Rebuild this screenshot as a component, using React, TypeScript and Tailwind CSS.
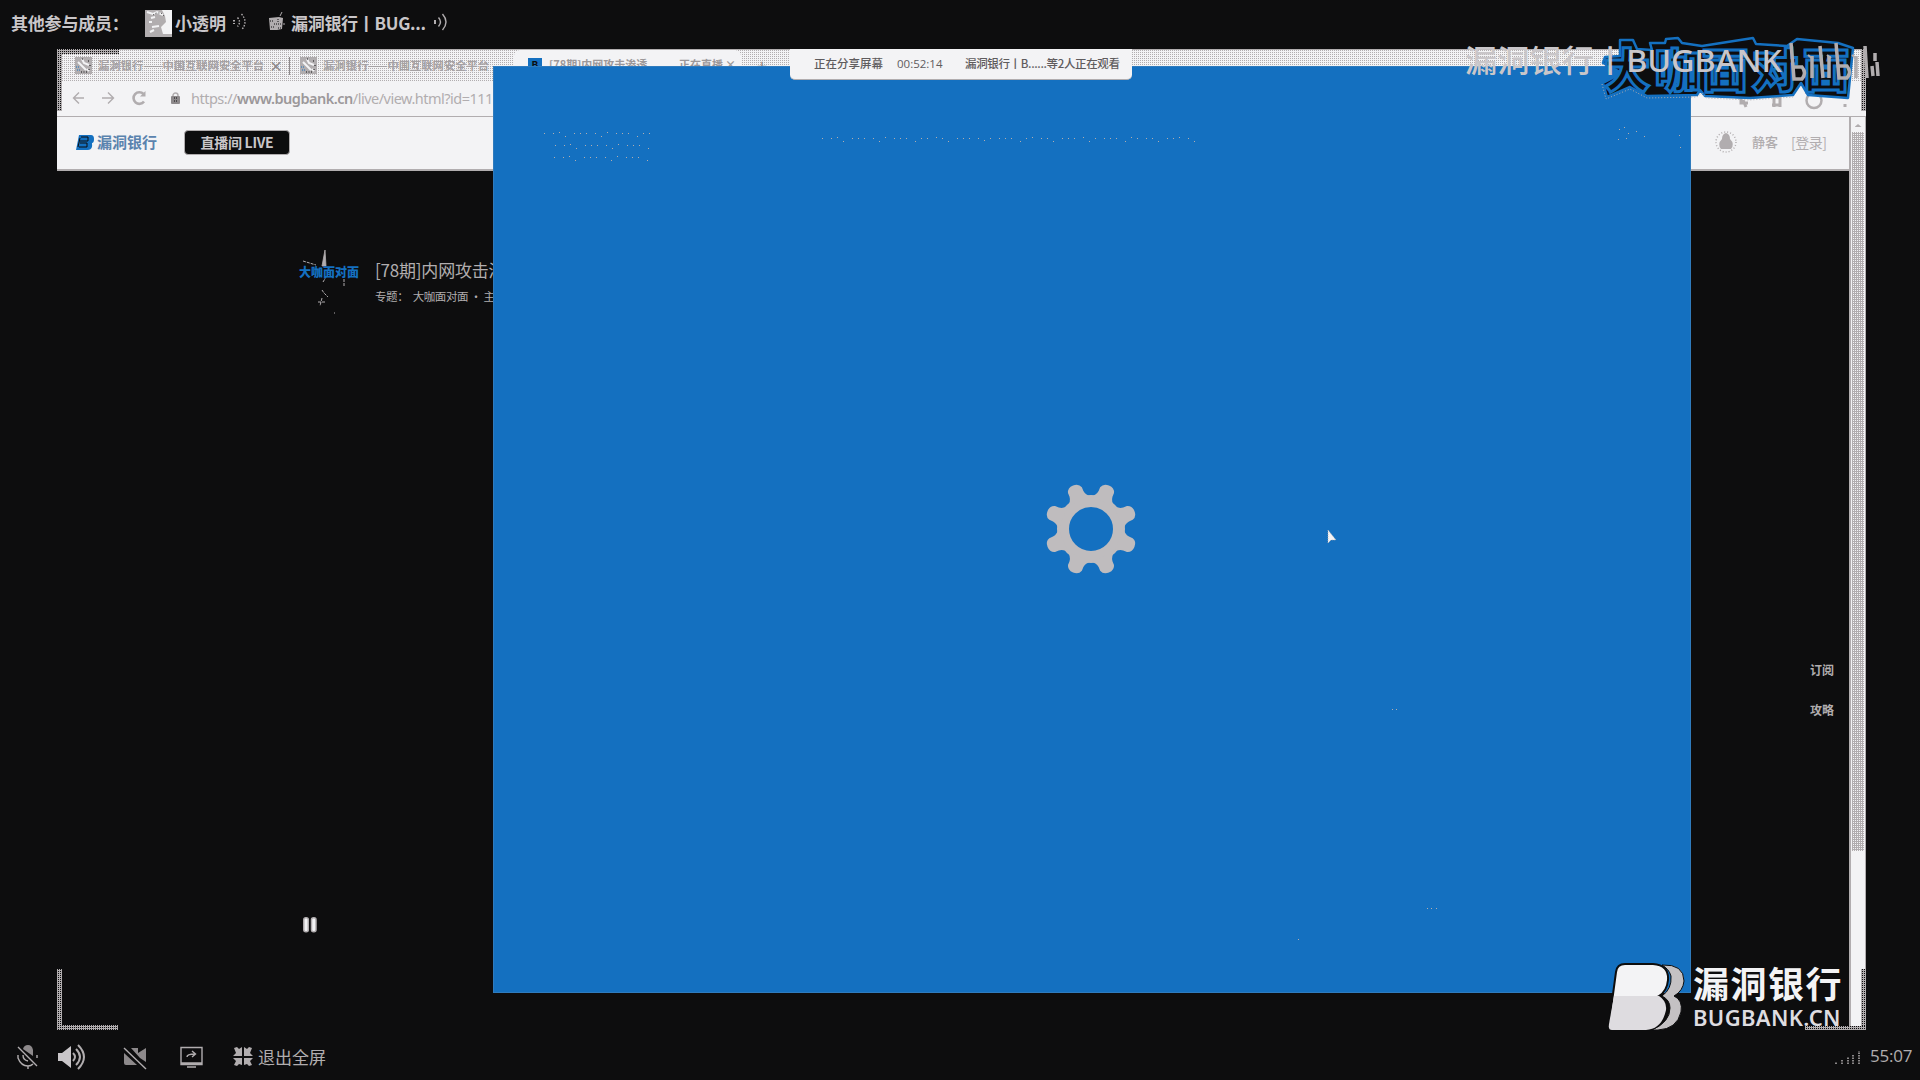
import type { ReactNode } from 'react';

const dither = 'bg-[conic-gradient(#b1adaf_25%,#f3f3f5_0)] bg-[length:2px_2px]';
const ditherDense = 'bg-[conic-gradient(#f3f3f5_25%,#b1adaf_0)] bg-[length:2px_2px]';
const ditherDark = 'bg-[conic-gradient(#0d0d0e_25%,#b1adaf_0)] bg-[length:2px_2px]';

function Waves({ faint = false }: { faint?: boolean }) {
  return (
    <svg className="mt-px" width="16" height="22" viewBox="0 0 16 22" fill="none" stroke="#b1adaf" strokeWidth="1.4" strokeDasharray={faint ? '1.5 1.5' : undefined}>
      <path d="M2 9v4" strokeWidth="2" />
      <path d="M5.5 6.5q4 4.500 0 9" />
      <path d="M9.500 3q7 8 0 16" />
    </svg>
  );
}

function Members() {
  return (
    <header className="flex h-[49px] items-start pt-[10px] text-[17px] leading-[26px] font-bold text-[#c9c6c9]">
      <span className="ml-[11px] w-[134px] tracking-[-0.2px] whitespace-nowrap">其他参与成员：</span>
      <svg width="27" height="27" viewBox="0 0 27 27">
        <rect width="27" height="27" fill="#b1adaf" />
        <path d="M17 0H27V24H18L16 17 21 12 20 6Z" fill="#f3f3f5" />
        <path d="M2 2l6 2 4-2 6 3M6 8l4-1M7 17l7-1M5 22l4-2M4 12h3" stroke="#f3f3f5" strokeWidth="2" fill="none" />
        <path d="M8 5l3-2h5l3 3" stroke="#0d0d0e" strokeWidth=".8" strokeDasharray="1 2" fill="none" />
      </svg>
      <span className="ml-[3px] w-[57px] whitespace-nowrap">小透明</span>
      <Waves faint />
      <svg className="ml-[21px]" width="16" height="24" viewBox="0 0 16 24">
        <path d="M0 8l10-1 4 1-1 11-5 1H1Z" fill="#b1adaf" />
        <path d="M1 11h4M5 14h8M9 9v4M2 17h3M9 18h3" stroke="#0d0d0e" strokeWidth="1" strokeDasharray="1 1" />
        <path d="M13 2l-2 4M14 14h2" stroke="#b1adaf" />
      </svg>
      <span className="ml-[6px] w-[142px] tracking-[-0.3px] whitespace-nowrap">漏洞银行丨BUG...</span>
      <Waves />
    </header>
  );
}

function Favicon() {
  return (
    <svg className="shrink-0" width="17" height="17" viewBox="0 0 17 17">
      <rect width="17" height="17" fill="#b1adaf" />
      <path d="M3 5l4 4 4 4M7 2l2 4 5 2M12 12l2 2" stroke="#f3f3f5" strokeWidth="2" fill="none" />
      <path d="M7 2h1M13 4h1M15 8v1M14 12v1M6 15h7" stroke="#0d0d0e" strokeDasharray="1 1.500" fill="none" />
      <path d="M1 10h3M2 13h3" stroke="#1470c0" strokeDasharray="1 1" />
    </svg>
  );
}

function Tab({ title, close }: { title: string; close?: boolean }) {
  return (
    <div className="flex shrink-0 items-center">
      <Favicon />
      <span className="ml-[6px] w-[166px] text-[11.300px] font-bold whitespace-nowrap text-[#a5a1a3]">{title}</span>
      {close && <span className="ml-[5px] w-[10px] text-[14px] font-bold text-[#8d898b]">×</span>}
    </div>
  );
}

function Browser() {
  return (
    <section className="flex h-[981px] w-full flex-col border-t border-[#b1adaf]">
      <div className={`${dither} flex h-[31px] shrink-0 overflow-hidden`}>
        <div className="flex w-[457px] items-center pl-[18px]">
          <Tab title="漏洞银行——中国互联网安全平台" close />
          <span className="mr-[10px] ml-[10px] h-[18px] w-px shrink-0 bg-[#8d898b]" />
          <Tab title="漏洞银行——中国互联网安全平台" />
        </div>
        <div className="flex w-[227px] rounded-t-[6px] bg-[#f3f3f5] pt-[6px] pl-[14px] text-[11px] leading-[16px] font-bold text-[#9c989a]">
          <span className="mt-[2px] h-[16px] w-[14px] bg-[#1470c0] text-center text-[10px] leading-[14px] text-[#0d0d0e]">B</span>
          <span className="ml-[7px] w-[103px] whitespace-nowrap">[78期]内网攻击渗透</span>
          <span className="ml-[27px] w-[46px] whitespace-nowrap">正在直播</span>
          <span>×</span>
        </div>
        <span className="ml-[16px] text-[18px] leading-[30px] text-[#8d898b]">+</span>
      </div>
      <div className="flex h-[36px] shrink-0 items-center border-b border-[#b1adaf] bg-[#f3f3f5] pb-px pl-[15px]">
        <svg width="74" height="18" viewBox="0 0 74 18" fill="none" stroke="#b1adaf" strokeWidth="1.4">
          <path d="M12 9H2M7 3.500L1.500 9 7 14.500M30 9h11M36 3.500L41.500 9 36 14.500" />
          <path d="M71.500 5A5.800 5.800 0 1 0 72 12.500" strokeWidth="2.600" />
          <path d="M73.500 2v5.500H68Z" fill="#b1adaf" stroke="none" />
        </svg>
        <svg className="ml-[25px]" width="9" height="12" viewBox="0 0 9 12">
          <path d="M2 5V3.500a2.500 2.500 0 0 1 5 0V5" fill="none" stroke="#b1adaf" strokeWidth="1.500" />
          <rect y="4" width="9" height="8" rx="1" fill="#8d898b" />
          <path d="M3 6h3M3 9h3" stroke="#0d0d0e" strokeDasharray="1 1" />
        </svg>
        <span className="ml-[11px] pt-px font-['Noto_Sans','Noto_Sans_CJK_SC',sans-serif] text-[14.500px] tracking-[-0.500px] whitespace-nowrap text-[#b1adaf]">
          https://<b className="font-semibold text-[#9c989a]">www.bugbank.cn</b>/live/view.html?id=111
        </span>
        <svg className="mt-[6px] mr-[15px] ml-auto" width="123" height="22" viewBox="0 0 123 22" fill="none" stroke="#b1adaf" strokeWidth="3">
          <path d="M7 7h6v6h7M15 10l3 7" />
          <path d="M46 17V7h6v10M44 15h8" />
          <circle cx="86" cy="10.500" r="7.500" strokeWidth="2.500" />
          <path d="M117 6v3M117 14v3" />
        </svg>
      </div>
      <div className="flex min-h-0 flex-1">
        <div className="flex min-w-0 flex-1 flex-col">
          <div className="flex h-[54px] shrink-0 items-center border-b-2 border-[#b1adaf] bg-[#f3f3f5] pb-[2px] pl-[19px]">
            <svg width="18" height="15" viewBox="0 0 18 15">
              <path d="M3 0H15Q18 0 18 4T16 8Q17 15 12 15H0Z" fill="#1470c0" />
              <path d="M5 2h7v4H4M4 8h7v4H3M4 3L2 12" stroke="#0d0d0e" fill="none" />
            </svg>
            <span className="ml-[3px] w-[61px] text-[15px] font-bold whitespace-nowrap text-[#5a83ae]">漏洞银行</span>
            <span className="ml-[26px] flex h-[25px] w-[106px] items-center justify-center rounded-[4px] border border-[#b1adaf] bg-[#0d0d0e] text-[14px] font-bold tracking-[-0.3px] whitespace-nowrap text-[#c9c6c9]">直播间 LIVE</span>
            <div className="mr-[24px] ml-auto flex items-center text-[13px] text-[#b1adaf]">
              <svg width="22" height="24" viewBox="0 0 22 24">
                <circle cx="11" cy="12" r="10" fill="none" stroke="#b1adaf" strokeWidth="1.500" strokeDasharray="1 2" />
                <path d="M11 3Q15 4 15 9 20 14 16 19H6Q2 14 7 9 7 4 11 3Z" fill="#b1adaf" />
              </svg>
              <span className="ml-[15px] w-[26px] font-medium">静客</span>
              <span className="ml-[13px] w-[34px] text-[14px] tracking-[-0.5px] whitespace-nowrap">[登录]</span>
            </div>
          </div>
          <div className="flex flex-1 flex-col pt-[77px] pl-[241px]">
            <div className="flex items-start">
              <div className="relative h-[72px] w-[62px] shrink-0">
                <svg className="absolute inset-0" width="62" height="72" viewBox="0 0 62 72" fill="none" stroke="#b1adaf">
                  <path d="M24 18L27 2 28 18Z" fill="#b1adaf" strokeWidth=".8" />
                  <path d="M5 13l13 4M25 34l3-5M46 31v8M24 42l2 3 4 4M20 54h7M24 50l-2 8M36 65h1" strokeDasharray="3 1" />
                </svg>
                <span className="absolute top-[15px] left-px text-[12px] leading-[18px] font-black whitespace-nowrap text-[#1470c0]">大咖面对面</span>
              </div>
              <div className="ml-[15px] w-[300px] text-[#b1adaf]">
                <div className="pt-[10px] text-[17px] leading-[24px] tracking-[-0.2px] whitespace-nowrap">[78期]内网攻击渗透</div>
                <div className="mt-[6px] text-[11.500px] leading-[16px] tracking-[-0.4px] whitespace-pre">专题：  大咖面对面 · 主讲人</div>
              </div>
            </div>
            <svg className="mt-[597px] ml-[5px]" width="14" height="16" viewBox="0 0 14 16" fill="#f3f3f5" stroke="#b1adaf" strokeWidth="1.500">
              <rect x=".8" y=".8" width="4.500" height="14" rx="2" />
              <rect x="8.500" y=".8" width="4.500" height="14" rx="2" />
            </svg>
          </div>
        </div>
        <div className="flex w-[17px] shrink-0 flex-col border-r border-l-2 border-[#b1adaf] bg-[#f3f3f5] pr-px pl-px">
          <span className="mx-auto mt-[7px] h-[3px] w-[7px] bg-[#b1adaf] [clip-path:polygon(50%_0,100%_100%,0_100%)]" />
          <span className={`${ditherDense} mt-[5px] h-[719px]`} />
        </div>
      </div>
    </section>
  );
}

const specks: [number, number, number][] = [
  [50, 66, 16], [61, 78, 14], [60, 90, 14], [328, 71, 54],
];

function SettingsWindow() {
  return (
    <div className="absolute top-[17px] left-[436px] flex h-[927px] w-[1198px] border border-[#2f7bbd] bg-[#1470c0]">
      <svg width="1196" height="925" viewBox="0 0 1196 925">
        {specks.map(([x, y, n], row) =>
          Array.from({ length: n }, (_, i) => (
            <rect key={`${row}-${i}`} x={x + i * 7 + ((i * 5) % 3)} y={y + (i % 5 === 3 ? 3 : 0) + (i % 7 === 2 ? -1 : 0)} width="1" height="1" fill="#b1adaf" />
          )),
        )}
        {[[1125, 62], [1130, 60], [1134, 66], [1142, 64], [1124, 72], [1132, 71], [1150, 69], [1185, 68], [1186, 80], [898, 642], [902, 642], [933, 841], [937, 841], [942, 841], [804, 872]].map(([x, y]) => (
          <rect key={`${x}-${y}`} x={x} y={y} width="1" height="1" fill="#b1adaf" />
        ))}
        <g transform="translate(597 462)">
          <circle r="28" fill="none" stroke="#bfbcbe" strokeWidth="12" />
          {[22.500, 67.500, 112.500, 157.500, 202.500, 247.500, 292.500, 337.500].map((a) => (
            <path key={a} transform={`rotate(${a})`} d="M-13 -30Q-8 -33 -7.500 -38V-42Q-6 -47 0 -47T7.500 -42V-38Q8 -33 13 -30Z" fill="#bfbcbe" />
          ))}
        </g>
        <path d="M834 463l0 13 3-3 5 0Z" fill="#f3f3f5" stroke="#b1adaf" strokeWidth=".7" strokeDasharray="1 1" />
      </svg>
    </div>
  );
}

function ShareBar() {
  return (
    <div className="absolute top-0 left-[733px] flex h-[31px] w-[342px] items-center rounded-b-[5px] border-b border-[#b1adaf] bg-[#f3f3f5] text-[11.500px] font-medium whitespace-nowrap text-[#5f5c5e]">
      <span className="ml-[24px] w-[83px]">正在分享屏幕</span>
      <span className="w-[68px] font-['Open_Sans',sans-serif]">00:52:14</span>
      <span className="tracking-[-0.35px]">漏洞银行丨B......等2人正在观看</span>
    </div>
  );
}

function Banner() {
  return (
    <svg className="absolute top-[-16px] left-[1400px]" width="480" height="72" viewBox="1457 33 480 72">
      <path
        d="M1620 40L1633 40 1637 49 1652 50 1650 43 1665 43 1666 39 1678 38 1682 43 1702 46 1753 38 1756 44 1787 46 1797 39 1838 43 1853 48 1848 98 1808 95 1801 83 1793 95 1750 98 1705 96 1700 90 1697 95 1647 96 1630 87 1607 97 1603 83 1622 73 1603 63 1605 57 1620 56Z"
        fill="#0d0d0e" stroke="#1470c0" strokeWidth="2.500" strokeLinejoin="round"
      />
      <path d="M1602 84l4 15 24-10 17 9 50-1 5-4 4 5 44 2 43-3" fill="none" stroke="#b1adaf" strokeDasharray="1 2" />
      <g fill="#0d0d0e" stroke="#1470c0" strokeWidth="3" fontWeight="900" fontSize="46" fontFamily="'Noto Sans CJK SC',sans-serif">
        <text x="1604" y="87">大</text>
        <text x="1655" y="87">咖</text>
        <text x="1702" y="87">面</text>
        <text x="1752" y="87">对</text>
        <text x="1803" y="87">面</text>
      </g>
      <text x="1465" y="72" fontSize="31" fontWeight="500" fill="#c9c6c9" textLength="317" lengthAdjust="spacingAndGlyphs" fontFamily="'Noto Sans','Noto Sans CJK SC',sans-serif">漏洞银行丨BUGBANK</text>
      <g fill="none" stroke="#b1adaf" strokeWidth="3.500">
        <path d="M1791 43l3 36h8q5-6 0-12h-8M1812 56v22M1820 46l3 32M1829 56v22M1836 43l3 35h8q5-6 0-12h-8M1856 56v22M1865 46l2 32M1875 53v8M1872 66l1 10M1877 62l1 14" />
        <path d="M1808 55l5 4M1827 55l4 3M1852 55l5 4" strokeWidth="2" />
      </g>
    </svg>
  );
}

function BankLogo() {
  return (
    <div className="absolute top-[913px] left-[1551px] flex items-start">
      <svg width="80" height="70" viewBox="0 0 80 70">
        <path d="M54 3Q76 2 76 19 75 29 66 34 75 38 73 50 69 67 50 68H44Q62 60 62 46 62 38 54 34 64 27 63 14 61 7 54 3Z" fill="#c4c1c3" stroke="#0d0d0e" strokeWidth="1" />
        <path d="M17 2H45Q61 3 60 18 59 29 51 34 59 39 58 48 54 67 38 68H4Q0 68 1 62L8 10Q9 2 17 2Z" fill="#f3f3f5" stroke="#0d0d0e" strokeWidth="2" />
        <path d="M6 34H51Q59 39 58 48 54 67 38 68H4Q0 68 1 62Z" fill="#dedce0" />
      </svg>
      <div className="ml-[5px] pt-[2px] leading-none whitespace-nowrap text-[#f3f3f5]">
        <div className="text-[36px] leading-[36px] font-bold tracking-[1.500px]">漏洞银行</div>
        <div className="mt-[6px] font-['Noto_Sans',sans-serif] text-[22px] leading-[22px] font-semibold tracking-[0.35px] text-[#dedce0]">BUGBANK.CN</div>
      </div>
    </div>
  );
}

function Control({ children, className }: { children: ReactNode; className: string }) {
  return (
    <svg className={className} height="26" fill="none" stroke="#b1adaf" strokeWidth="1.400">
      {children}
    </svg>
  );
}

function Controls() {
  return (
    <footer className="flex h-[50px] items-start pt-[14px] text-[#b1adaf]">
      <Control className="ml-[17px] w-[21px]">
        <path d="M6 5q1-4 5-4t5 5v6Z" fill="#8d898b" stroke="none" />
        <path d="M1 3l19 19M1 11v3q3 8 10 8 3 0 5-2M20 11v3M11 22v3M6 11q0 5 5 6" />
      </Control>
      <Control className="ml-[20px] w-[27px]">
        <path d="M0 9h4l9-7v22l-9-7H0Z" fill="#c9c6c9" stroke="none" />
        <path d="M15 9q4 4 0 8M18 5q8 8 0 16M20 1q12 12 0 24" strokeWidth="2" />
      </Control>
      <Control className="ml-[38px] w-[24px]">
        <path d="M1 9l13 12H3q-2 0-2-2ZM8 4h7v5l8-5v14l-6-4Z" fill="#8d898b" stroke="none" />
        <path d="M1 4l22 21" />
      </Control>
      <Control className="ml-[33px] w-[23px]">
        <path d="M1 3.500h21v17H1ZM1 19h21" />
        <path d="M7 13q0-3 8-3M12 7l3.500 3-3.500 3M7 23h9" />
      </Control>
      <Control className="ml-[30px] w-[20px]">
        <path d="M1 4l3-1 2 2 3-2v9H0l3-3ZM19 4l-3-1-2 2-3-2v9h9l-3-3ZM1 21l3 1 2-2 3 1v-7H0l3 3ZM19 21l-3 1-2-2-3 1v-7h9l-3 3Z" fill="#b1adaf" stroke="none" />
      </Control>
      <span className="ml-[5px] text-[17px] leading-[26px] whitespace-nowrap">退出全屏</span>
      <svg className="mt-[6px] ml-auto" width="27" height="14" viewBox="0 0 27 14" stroke="#b1adaf" strokeWidth="1.500" strokeDasharray="1.500 1">
        <path d="M2 14v-2M8 14v-4M14 14V7M19 14V4M25 14V1" />
      </svg>
      <span className="mr-[7px] ml-[9px] w-[43px] font-['Open_Sans',sans-serif] text-[17px] leading-[24px] tracking-[-0.2px]">55:07</span>
    </footer>
  );
}

export default function App() {
  return (
    <div className="flex h-[1080px] w-[1920px] flex-col overflow-hidden bg-[#0d0d0e] font-['Noto_Sans_CJK_SC',sans-serif]">
      <Members />
      <main className="relative ml-[57px] h-[981px] w-[1809px]">
        <Browser />
        <SettingsWindow />
        <ShareBar />
        <span className={`${ditherDark} absolute top-0 left-0 h-[5px] w-[62px]`} />
        <span className={`${ditherDark} absolute top-0 left-0 h-[62px] w-[5px]`} />
        <span className={`${ditherDark} absolute top-0 right-0 h-[62px] w-[5px]`} />
        <span className={`${ditherDark} absolute bottom-0 left-0 h-[61px] w-[5px]`} />
        <span className={`${ditherDark} absolute bottom-0 left-0 h-[5px] w-[61px]`} />
        <span className={`${ditherDark} absolute right-0 bottom-0 h-[61px] w-[5px]`} />
        <span className={`${ditherDark} absolute right-0 bottom-0 h-[4px] w-[61px]`} />
        <Banner />
        <div className="absolute top-[612px] left-[1753px] flex flex-col gap-[22px] text-[12px] leading-[18px] font-bold text-[#b1adaf]">
          <span>订阅</span>
          <span>攻略</span>
        </div>
        <BankLogo />
      </main>
      <Controls />
    </div>
  );
}
